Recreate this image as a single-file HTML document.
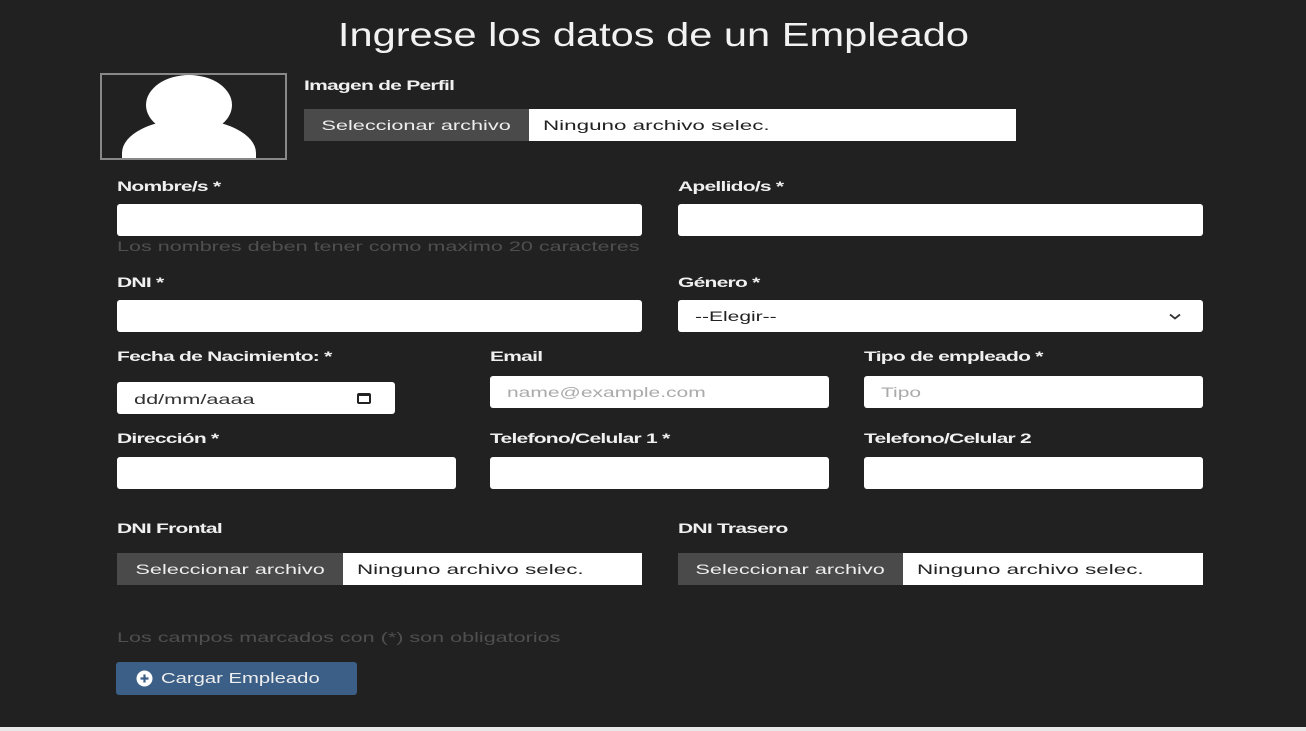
<!DOCTYPE html>
<html><head><meta charset="utf-8"><style>
*{box-sizing:border-box;margin:0;padding:0}
body{width:1306px;height:731px;background:#e8e8e8;font-family:"Liberation Sans",sans-serif;position:relative;overflow:hidden}
.bg{position:absolute;left:0;top:0;width:1306px;height:727px;background:#212121}
.a{position:absolute}
.s{display:inline-block;transform:scaleX(1.5);transform-origin:0 50%;white-space:nowrap}
.c{display:inline-block;transform:scaleX(1.5);transform-origin:50% 50%;white-space:nowrap}
.t{position:absolute;left:0;width:1306px;top:16px;text-align:center;color:#f2f2f2;font-size:33px}
.t span{display:inline-block;transform:scaleX(1.26)}
.l{position:absolute;color:#f0f0f0;font-size:14px;font-weight:bold;letter-spacing:-.5px}
.l .s{transform:scaleX(1.5)}
.i{position:absolute;background:#fff;border-radius:3px;height:32px}
.ph{color:#aaa;font-size:14px;padding:8px 17px}
.f{position:absolute;height:32px;background:#fff;display:flex;font-size:14px;color:#222}
.f .b{background:#4a4a4a;color:#eee;display:flex;align-items:center;justify-content:center}
.f .n{display:flex;align-items:center;padding-left:14px}
.f .s{transform:scaleX(1.6)}
.h{position:absolute;color:#4f4f4f;font-size:14px}
.h .s{transform:scaleX(1.54)}
</style></head><body>
<div class="bg"></div>
<div class="t"><span>Ingrese los datos de un Empleado</span></div>
<div class="a" style="left:100px;top:73px;width:187px;height:87px;border:2px solid #888;overflow:hidden;background:#212121">
<div class="a" style="left:20px;top:44px;width:134px;height:60px;border-radius:67px 67px 0 0/34px 34px 0 0;background:#fff"></div>
<div class="a" style="left:44px;top:0px;width:86px;height:60px;border-radius:50%;background:#fff"></div>
</div>
<div class="l" style="left:304px;top:77px"><span class="s">Imagen de Perfil</span></div>
<div class="f" style="left:304px;top:109px;width:712px"><div class="b" style="width:225px"><span class="c" style="transform:scaleX(1.55)">Seleccionar archivo</span></div><div class="n"><span class="s">Ninguno archivo selec.</span></div></div>

<div class="l" style="left:117px;top:178px"><span class="s">Nombre/s *</span></div>
<div class="i" style="left:117px;top:204px;width:525px"></div>
<div class="h" style="left:117px;top:238px"><span class="s">Los nombres deben tener como maximo 20 caracteres</span></div>
<div class="l" style="left:678px;top:178px"><span class="s">Apellido/s *</span></div>
<div class="i" style="left:678px;top:204px;width:525px"></div>

<div class="l" style="left:117px;top:274px"><span class="s">DNI *</span></div>
<div class="i" style="left:117px;top:300px;width:525px"></div>
<div class="l" style="left:678px;top:274px"><span class="s">Género *</span></div>
<div class="i ph" style="left:678px;top:300px;width:525px;color:#222;padding-left:17px"><span class="s">--Elegir--</span><svg class="a" style="right:22px;top:13px" width="12" height="8" viewBox="0 0 12 8"><path d="M1 1.5l5 4 5-4" stroke="#333" stroke-width="1.8" fill="none"/></svg></div>

<div class="l" style="left:117px;top:348px"><span class="s">Fecha de Nacimiento: *</span></div>
<div class="i ph" style="left:117px;top:382px;width:278px;color:#333;padding-top:9px"><span class="s" style="transform:scaleX(1.55)">dd/mm/aaaa</span><div class="a" style="left:240px;top:11px;width:14px;height:11px;border:2px solid #222;border-top-width:3px;border-radius:2px"></div></div>
<div class="l" style="left:490px;top:348px"><span class="s">Email</span></div>
<div class="i ph" style="left:490px;top:376px;width:339px"><span class="s">name@example.com</span></div>
<div class="l" style="left:864px;top:348px"><span class="s">Tipo de empleado *</span></div>
<div class="i ph" style="left:864px;top:376px;width:339px"><span class="s">Tipo</span></div>

<div class="l" style="left:117px;top:430px"><span class="s">Dirección *</span></div>
<div class="i" style="left:117px;top:457px;width:339px"></div>
<div class="l" style="left:490px;top:430px"><span class="s">Telefono/Celular 1 *</span></div>
<div class="i" style="left:490px;top:457px;width:339px"></div>
<div class="l" style="left:864px;top:430px"><span class="s">Telefono/Celular 2</span></div>
<div class="i" style="left:864px;top:457px;width:339px"></div>

<div class="l" style="left:117px;top:520px"><span class="s">DNI Frontal</span></div>
<div class="f" style="left:117px;top:553px;width:525px"><div class="b" style="width:226px"><span class="c" style="transform:scaleX(1.55)">Seleccionar archivo</span></div><div class="n"><span class="s">Ninguno archivo selec.</span></div></div>
<div class="l" style="left:678px;top:520px"><span class="s">DNI Trasero</span></div>
<div class="f" style="left:678px;top:553px;width:525px"><div class="b" style="width:225px"><span class="c" style="transform:scaleX(1.55)">Seleccionar archivo</span></div><div class="n"><span class="s">Ninguno archivo selec.</span></div></div>

<div class="h" style="left:117px;top:629px"><span class="s">Los campos marcados con (*) son obligatorios</span></div>
<div class="a" style="left:116px;top:662px;width:241px;height:33px;background:#3b5f86;border-radius:3px;color:#eee;font-size:15px;display:flex;align-items:center;padding-left:20px">
<svg width="17" height="17" viewBox="0 0 17 17" style="margin-right:8px"><circle cx="8.5" cy="8.5" r="8" fill="#fff"/><path d="M8.5 4.5v8M4.5 8.5h8" stroke="#3b5f86" stroke-width="2.2"/></svg><span class="s" style="transform:scaleX(1.35)">Cargar Empleado</span></div>
</body></html>
